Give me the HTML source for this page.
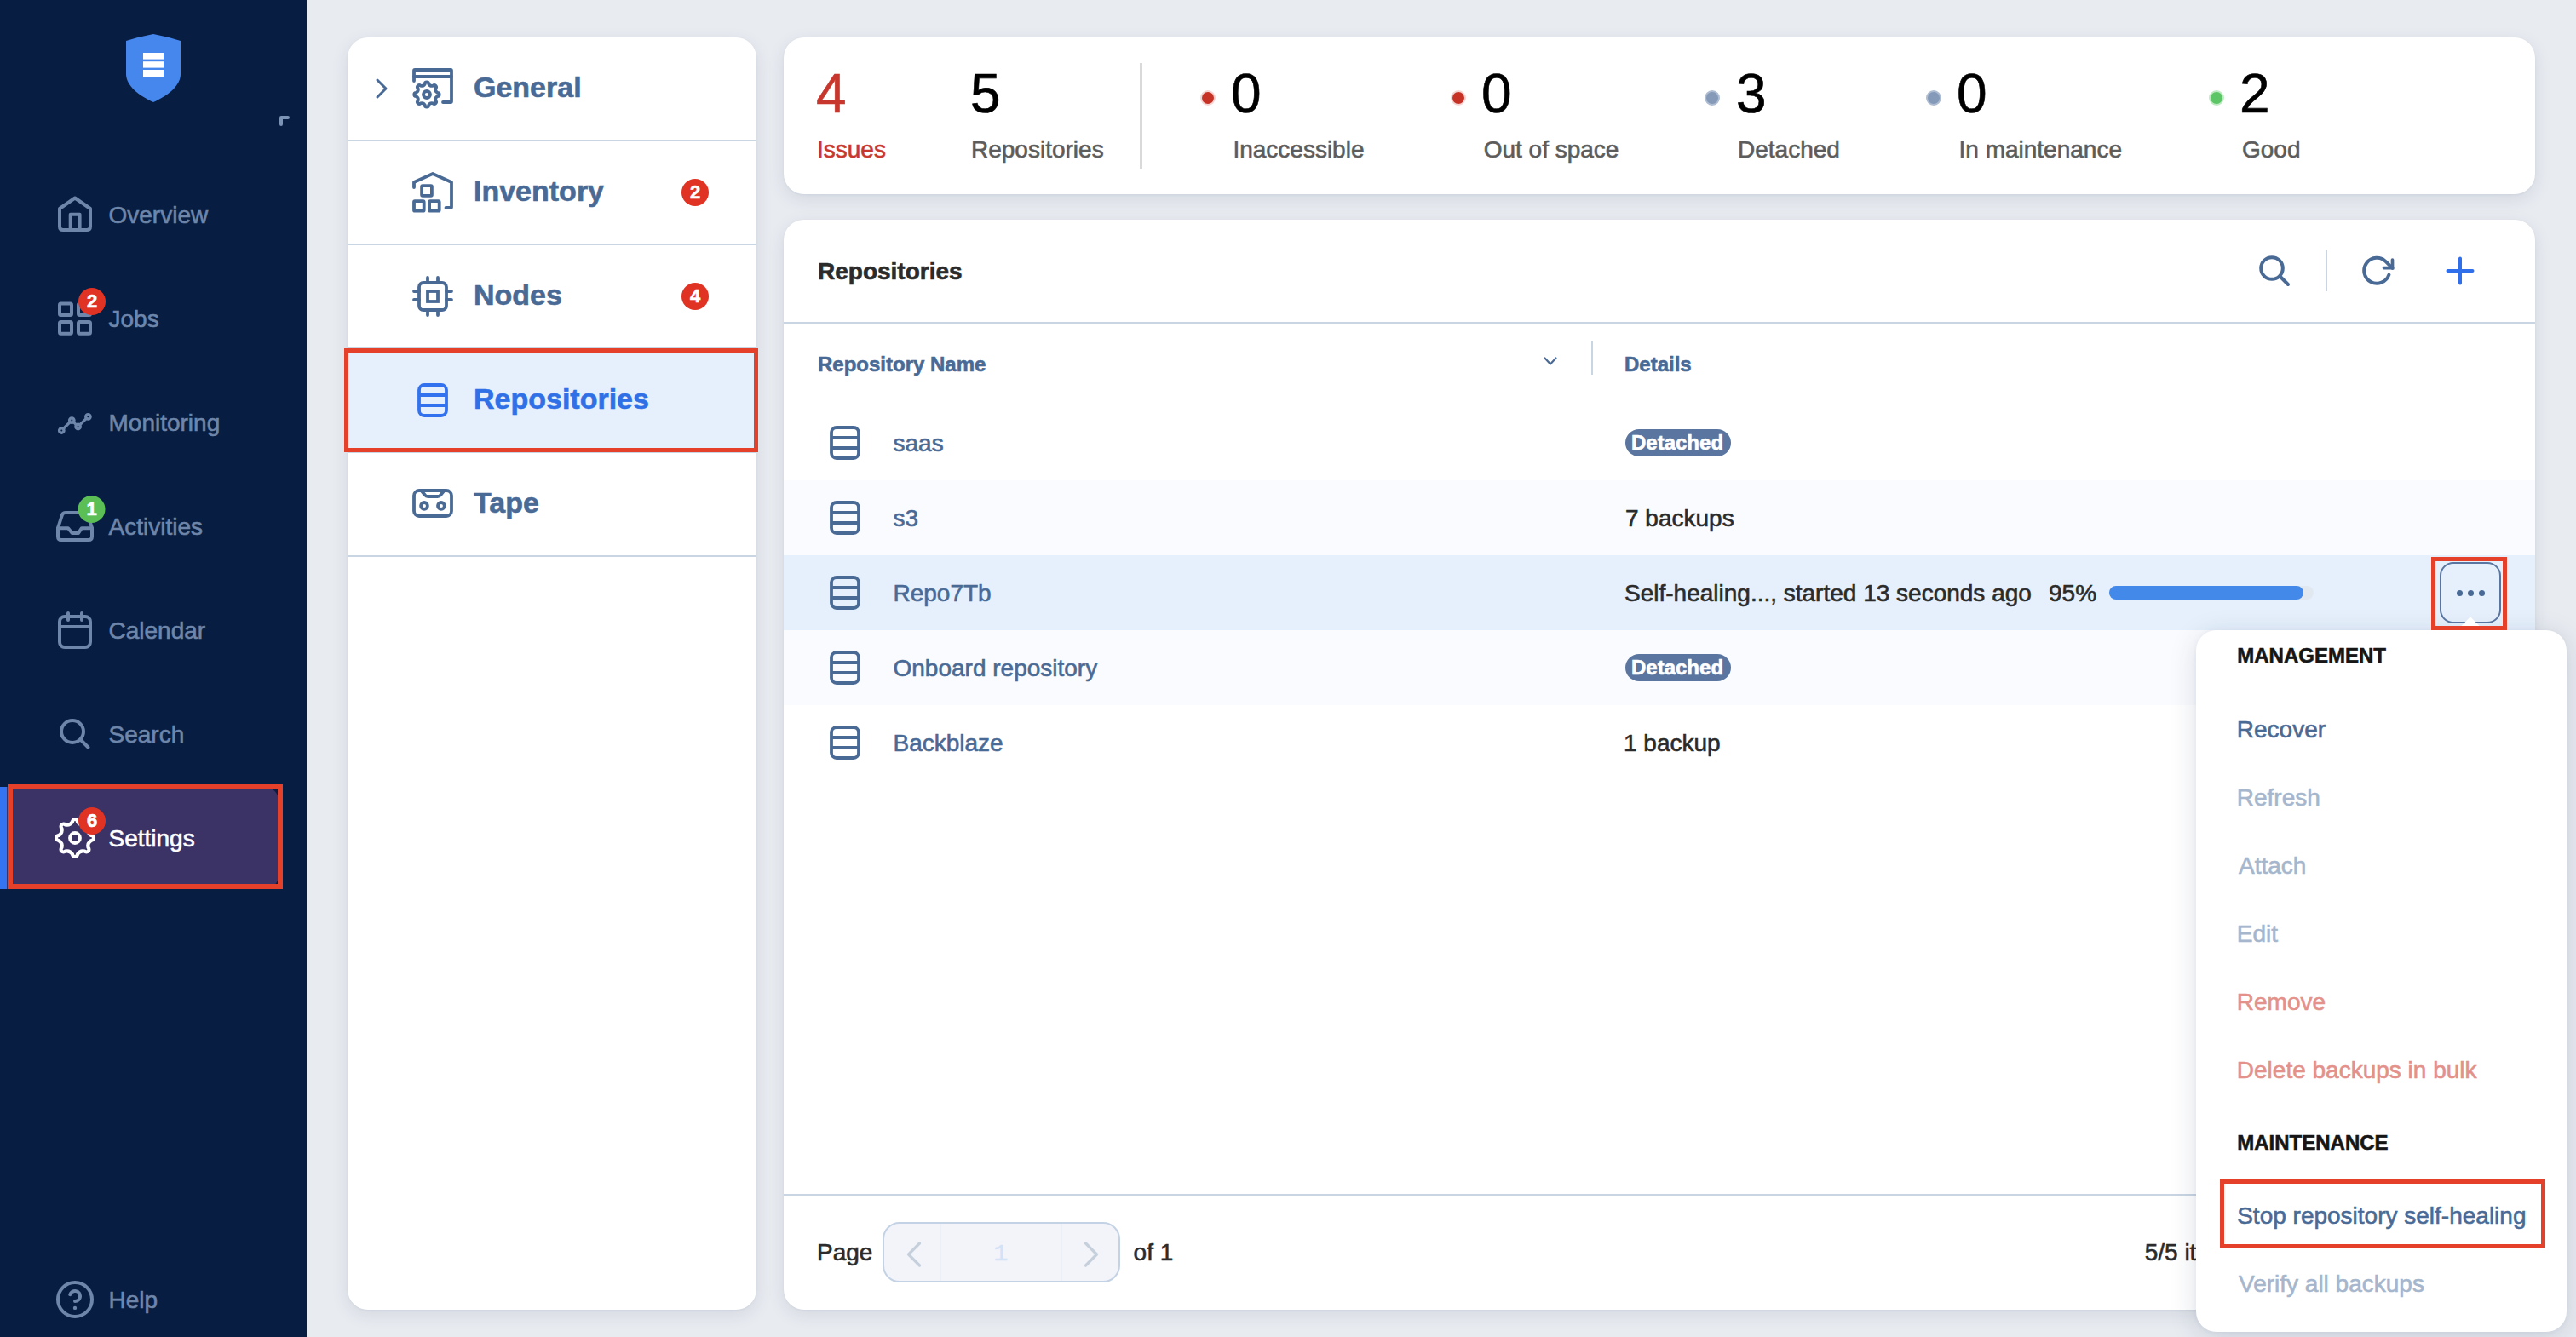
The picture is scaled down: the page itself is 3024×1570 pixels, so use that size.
<!DOCTYPE html>
<html><head><meta charset="utf-8"><style>
html,body{margin:0;padding:0;}
body{width:3024px;height:1570px;overflow:hidden;background:#e8ebf0;font-family:"Liberation Sans",sans-serif;position:relative;}
.t{position:absolute;line-height:1;white-space:nowrap;-webkit-text-stroke:0.6px currentColor;}
.abs{position:absolute;}
svg{position:absolute;overflow:visible;}
</style></head><body>
<div class="abs" style="left:0;top:0;width:360px;height:1570px;background:#071d41"></div>
<div class="abs" style="left:8px;top:924px;width:319px;height:120px;background:#3b3366;border-radius:0 16px 16px 0"></div>
<div class="abs" style="left:0;top:924px;width:8px;height:120px;background:#3574f0"></div>
<svg width="3024" height="1570" style="left:0;top:0" viewBox="0 0 3024 1570"><g transform="translate(148,40)"><path d="M32 0 Q48 3 64 8 V47 C64 60 50 72 32 80 C14 72 0 60 0 47 V8 Q16 3 32 0Z" fill="#4687ee"/><rect x="20" y="22" width="24" height="7.6" fill="#fff"/><rect x="20" y="32.2" width="24" height="7.4" fill="#fff"/><rect x="20" y="42" width="24" height="8" fill="#fff"/></g><path d="M330 146 V138 H338" fill="none" stroke="#7b93b5" stroke-width="4" stroke-linecap="round" stroke-linejoin="round"/><path d="M70 245 L88 232.5 L106 245 V266 Q106 270 102 270 H74 Q70 270 70 266 Z" fill="none" stroke="#6e86aa" stroke-width="4" stroke-linecap="round" stroke-linejoin="round"/><path d="M82.7 270 V251.7 H93.6 V270" fill="none" stroke="#6e86aa" stroke-width="4" stroke-linecap="round" stroke-linejoin="round"/><rect x="70" y="356.4" width="14" height="13.7" rx="1.5" fill="none" stroke="#6e86aa" stroke-width="4" stroke-linecap="round" stroke-linejoin="round"/><rect x="92" y="356.4" width="14" height="13.7" rx="1.5" fill="none" stroke="#6e86aa" stroke-width="4" stroke-linecap="round" stroke-linejoin="round"/><rect x="70" y="378" width="14" height="13.7" rx="1.5" fill="none" stroke="#6e86aa" stroke-width="4" stroke-linecap="round" stroke-linejoin="round"/><rect x="92" y="378" width="14" height="13.7" rx="1.5" fill="none" stroke="#6e86aa" stroke-width="4" stroke-linecap="round" stroke-linejoin="round"/><polyline points="72.3,505.5 84.3,493.6 91.6,501 103.4,489.3" fill="none" stroke="#6e86aa" stroke-width="3.2"/><circle cx="72.3" cy="505.5" r="2.7" fill="#071d41" stroke="#6e86aa" stroke-width="3.4"/><circle cx="84.3" cy="493.6" r="2.7" fill="#071d41" stroke="#6e86aa" stroke-width="3.4"/><circle cx="91.6" cy="501" r="2.7" fill="#071d41" stroke="#6e86aa" stroke-width="3.4"/><circle cx="103.4" cy="489.3" r="2.7" fill="#071d41" stroke="#6e86aa" stroke-width="3.4"/><path d="M68 620 L73 604.5 Q74 602 77 602 H99 Q102 602 103 604.5 L108 620 V630 Q108 634 104 634 H72 Q68 634 68 630 Z" fill="none" stroke="#6e86aa" stroke-width="4" stroke-linecap="round" stroke-linejoin="round"/><path d="M68 620.2 H80 L84.7 625.9 H92.1 L95.9 620.2 H108" fill="none" stroke="#6e86aa" stroke-width="4" stroke-linecap="round" stroke-linejoin="round"/><rect x="70" y="724" width="36" height="36" rx="6" fill="none" stroke="#6e86aa" stroke-width="4" stroke-linecap="round" stroke-linejoin="round"/><path d="M70 736 H106 M80 720 V728 M96 720 V728" fill="none" stroke="#6e86aa" stroke-width="4" stroke-linecap="round" stroke-linejoin="round"/><circle cx="85" cy="859" r="13" fill="none" stroke="#6e86aa" stroke-width="4" stroke-linecap="round" stroke-linejoin="round"/><path d="M95 869 L103.5 877.5" fill="none" stroke="#6e86aa" stroke-width="4" stroke-linecap="round" stroke-linejoin="round"/><path d="M85.00 965.00A3.00 3.00 0 0 1 91.00 965.00Q93.93 969.68 99.31 968.44A3.00 3.00 0 0 1 103.56 972.69Q102.32 978.07 107.00 981.00A3.00 3.00 0 0 1 107.00 987.00Q102.32 989.93 103.56 995.31A3.00 3.00 0 0 1 99.31 999.56Q93.93 998.32 91.00 1003.00A3.00 3.00 0 0 1 85.00 1003.00Q82.07 998.32 76.69 999.56A3.00 3.00 0 0 1 72.44 995.31Q73.68 989.93 69.00 987.00A3.00 3.00 0 0 1 69.00 981.00Q73.68 978.07 72.44 972.69A3.00 3.00 0 0 1 76.69 968.44Q82.07 969.68 85.00 965.00Z" fill="none" stroke="#fff" stroke-width="4.2" stroke-linejoin="round"/><circle cx="88" cy="984" r="5.9" fill="none" stroke="#fff" stroke-width="4"/><circle cx="88" cy="1526" r="20" fill="none" stroke="#6e86aa" stroke-width="4" stroke-linecap="round" stroke-linejoin="round"/><path d="M82.3 1520.2 A6 6 0 1 1 88 1528" fill="none" stroke="#6e86aa" stroke-width="4" stroke-linecap="round" stroke-linejoin="round" stroke-width="3.8"/><circle cx="88" cy="1535.9" r="2.2" fill="#6e86aa"/><circle cx="108" cy="354" r="16" fill="#e03324"/><circle cx="107.5" cy="598" r="16" fill="#5bbf55"/><circle cx="108" cy="964" r="16" fill="#e03324"/></svg>
<div class="t" style="left:92px;width:32px;text-align:center;top:343.17px;font-size:22px;font-weight:700;color:#fff">2</div>
<div class="t" style="left:91.5px;width:32px;text-align:center;top:587.17px;font-size:22px;font-weight:700;color:#fff">1</div>
<div class="t" style="left:92px;width:32px;text-align:center;top:953.17px;font-size:22px;font-weight:700;color:#fff">6</div>
<div class="t" style="left:127.5px;top:239.29px;font-size:28px;color:#6e86aa;font-weight:400;">Overview</div>
<div class="t" style="left:127.5px;top:361.29px;font-size:28px;color:#6e86aa;font-weight:400;">Jobs</div>
<div class="t" style="left:127.5px;top:483.29px;font-size:28px;color:#6e86aa;font-weight:400;">Monitoring</div>
<div class="t" style="left:127.5px;top:605.29px;font-size:28px;color:#6e86aa;font-weight:400;">Activities</div>
<div class="t" style="left:127.5px;top:727.29px;font-size:28px;color:#6e86aa;font-weight:400;">Calendar</div>
<div class="t" style="left:127.5px;top:849.29px;font-size:28px;color:#6e86aa;font-weight:400;">Search</div>
<div class="t" style="left:127.5px;top:971.29px;font-size:28px;color:#fff;font-weight:400;">Settings</div>
<div class="t" style="left:127.5px;top:1513.29px;font-size:28px;color:#6e86aa;font-weight:400;">Help</div>
<div class="abs" style="left:408px;top:44px;width:480px;height:1494px;background:#fff;border-radius:24px;box-shadow:0 6px 20px rgba(40,60,100,0.10),0 1px 3px rgba(40,60,100,0.06);"></div>
<div class="abs" style="left:408px;top:410px;width:480px;height:120px;background:#e6effc"></div>
<div class="abs" style="left:408px;top:164px;width:480px;height:2px;background:#c9d5e3"></div>
<div class="abs" style="left:408px;top:286px;width:480px;height:2px;background:#c9d5e3"></div>
<div class="abs" style="left:408px;top:408px;width:480px;height:2px;background:#c9d5e3"></div>
<div class="abs" style="left:408px;top:530px;width:480px;height:2px;background:#c9d5e3"></div>
<div class="abs" style="left:408px;top:652px;width:480px;height:2px;background:#c9d5e3"></div>
<svg width="3024" height="1570" style="left:0;top:0" viewBox="0 0 3024 1570"><path d="M443 94 L453 104 L443 114" fill="none" stroke="#4a6a96" stroke-width="3" stroke-linecap="round" stroke-linejoin="round"/><g transform="translate(476,72)"><path d="M10 23 V11 Q10 10 11 10 H53 Q54 10 54 11 V47 Q54 48 53 48 H44" fill="none" stroke="#4a6a96" stroke-width="3.8" stroke-linecap="round" stroke-linejoin="round"/><path d="M10 18 H54" fill="none" stroke="#4a6a96" stroke-width="3.8" stroke-linecap="round" stroke-linejoin="round"/><path d="M22.80 26.50A2.20 2.20 0 0 1 27.20 26.50Q28.90 29.58 32.28 28.61A2.20 2.20 0 0 1 35.39 31.72Q34.42 35.10 37.50 36.80A2.20 2.20 0 0 1 37.50 41.20Q34.42 42.90 35.39 46.28A2.20 2.20 0 0 1 32.28 49.39Q28.90 48.42 27.20 51.50A2.20 2.20 0 0 1 22.80 51.50Q21.10 48.42 17.72 49.39A2.20 2.20 0 0 1 14.61 46.28Q15.58 42.90 12.50 41.20A2.20 2.20 0 0 1 12.50 36.80Q15.58 35.10 14.61 31.72A2.20 2.20 0 0 1 17.72 28.61Q21.10 29.58 22.80 26.50Z" fill="none" stroke="#4a6a96" stroke-width="3.8" stroke-linecap="round" stroke-linejoin="round"/><circle cx="25" cy="39" r="4" fill="none" stroke="#4a6a96" stroke-width="3.8" stroke-linecap="round" stroke-linejoin="round" stroke-width="3.6"/></g><g transform="translate(476,196)"><path d="M10 24 V18 L32 8 L54 18 V47 Q54 48 53 48 H47.5" fill="none" stroke="#4a6a96" stroke-width="3.8" stroke-linecap="round" stroke-linejoin="round"/><rect x="19.1" y="22.1" width="11.8" height="11.7" rx="1" fill="none" stroke="#4a6a96" stroke-width="3.8" stroke-linecap="round" stroke-linejoin="round"/><rect x="10" y="40.2" width="11.7" height="11.5" rx="1" fill="none" stroke="#4a6a96" stroke-width="3.8" stroke-linecap="round" stroke-linejoin="round"/><rect x="28.1" y="40.2" width="11.6" height="11.5" rx="1" fill="none" stroke="#4a6a96" stroke-width="3.8" stroke-linecap="round" stroke-linejoin="round"/></g><g transform="translate(476,316)"><rect x="16" y="16" width="32" height="32" rx="5" fill="none" stroke="#4a6a96" stroke-width="3.8" stroke-linecap="round" stroke-linejoin="round"/><rect x="26" y="26" width="12" height="12" fill="none" stroke="#4a6a96" stroke-width="3.8"/><path d="M26 10 V16 M38 10 V16 M26 48 V54 M38 48 V54 M10 26 H16 M10 36 H16 M48 26 H54 M48 36 H54" fill="none" stroke="#4a6a96" stroke-width="3.8" stroke-linecap="round" stroke-linejoin="round"/></g><rect x="492" y="452" width="32" height="36" rx="6" fill="none" stroke="#3272ee" stroke-width="3.8"/><path d="M492 464 H524 M492 476 H524" stroke="#3272ee" stroke-width="3.8"/><g transform="translate(476,558)"><rect x="10" y="18" width="44" height="30" rx="6" fill="none" stroke="#4a6a96" stroke-width="3.8" stroke-linecap="round" stroke-linejoin="round"/><path d="M18.5 18 L23 23.5 Q24 25 26.5 25 H37.5 Q40 25 41 23.5 L45.5 18" fill="none" stroke="#4a6a96" stroke-width="3.8" stroke-linecap="round" stroke-linejoin="round"/><circle cx="22" cy="35.9" r="3.9" fill="none" stroke="#4a6a96" stroke-width="3.8" stroke-linecap="round" stroke-linejoin="round"/><circle cx="41.9" cy="35.9" r="3.9" fill="none" stroke="#4a6a96" stroke-width="3.8" stroke-linecap="round" stroke-linejoin="round"/></g><circle cx="816" cy="226" r="16" fill="#e03324"/><circle cx="816" cy="348" r="16" fill="#e03324"/></svg>
<div class="t" style="left:800px;width:32px;text-align:center;top:215.17px;font-size:22px;font-weight:700;color:#fff">2</div>
<div class="t" style="left:800px;width:32px;text-align:center;top:337.17px;font-size:22px;font-weight:700;color:#fff">4</div>
<div class="t" style="left:556px;top:84.91px;font-size:34px;color:#4a6a96;font-weight:700;">General</div>
<div class="t" style="left:556px;top:206.91px;font-size:34px;color:#4a6a96;font-weight:700;">Inventory</div>
<div class="t" style="left:556px;top:328.91px;font-size:34px;color:#4a6a96;font-weight:700;">Nodes</div>
<div class="t" style="left:556px;top:450.91px;font-size:34px;color:#3070e6;font-weight:700;">Repositories</div>
<div class="t" style="left:556px;top:572.91px;font-size:34px;color:#4a6a96;font-weight:700;">Tape</div>
<div class="abs" style="left:404px;top:409px;width:486px;height:122px;border:5px solid #e5402a;box-sizing:border-box"></div>
<div class="abs" style="left:920px;top:44px;width:2056px;height:184px;background:#fff;border-radius:24px;box-shadow:0 6px 20px rgba(40,60,100,0.10),0 1px 3px rgba(40,60,100,0.06);"></div>
<div class="abs" style="left:1338px;top:74px;width:3px;height:124px;background:#d9d9d9"></div>
<div class="t" style="left:958px;top:77.81px;font-size:64px;color:#c8372d;font-weight:400;">4</div>
<div class="t" style="left:959.0px;top:162.29px;font-size:28px;color:#c8372d;font-weight:400;">Issues</div>
<div class="t" style="left:1139px;top:77.81px;font-size:64px;color:#000;font-weight:400;">5</div>
<div class="t" style="left:1140px;top:162.29px;font-size:28px;color:#5c5c5c;font-weight:400;">Repositories</div>
<div class="t" style="left:1445px;top:77.81px;font-size:64px;color:#000;font-weight:400;">0</div>
<div class="t" style="left:1447.4px;top:162.29px;font-size:28px;color:#5c5c5c;font-weight:400;">Inaccessible</div>
<div class="t" style="left:1739px;top:77.81px;font-size:64px;color:#000;font-weight:400;">0</div>
<div class="t" style="left:1741.7px;top:162.29px;font-size:28px;color:#5c5c5c;font-weight:400;">Out of space</div>
<div class="t" style="left:2038px;top:77.81px;font-size:64px;color:#000;font-weight:400;">3</div>
<div class="t" style="left:2040px;top:162.29px;font-size:28px;color:#5c5c5c;font-weight:400;">Detached</div>
<div class="t" style="left:2297px;top:77.81px;font-size:64px;color:#000;font-weight:400;">0</div>
<div class="t" style="left:2299.5px;top:162.29px;font-size:28px;color:#5c5c5c;font-weight:400;">In maintenance</div>
<div class="t" style="left:2629px;top:77.81px;font-size:64px;color:#000;font-weight:400;">2</div>
<div class="t" style="left:2632px;top:162.29px;font-size:28px;color:#5c5c5c;font-weight:400;">Good</div>
<div class="abs" style="left:1409px;top:106px;width:14px;height:14px;border-radius:50%;background:#c63226;border:2px solid #f6d6d4"></div>
<div class="abs" style="left:1703px;top:106px;width:14px;height:14px;border-radius:50%;background:#c63226;border:2px solid #f6d6d4"></div>
<div class="abs" style="left:2001px;top:106px;width:14px;height:14px;border-radius:50%;background:#8599b8;border:2px solid #aebdd2"></div>
<div class="abs" style="left:2261px;top:106px;width:14px;height:14px;border-radius:50%;background:#8599b8;border:2px solid #aebdd2"></div>
<div class="abs" style="left:2593px;top:106px;width:14px;height:14px;border-radius:50%;background:#5cc565;border:2px solid #bfeac3"></div>
<div class="abs" style="left:920px;top:258px;width:2056px;height:1280px;background:#fff;border-radius:24px;box-shadow:0 6px 20px rgba(40,60,100,0.10),0 1px 3px rgba(40,60,100,0.06);overflow:hidden"><div class="abs" style="left:0;top:306px;width:2056px;height:88px;background:#fafbfe"></div><div class="abs" style="left:0;top:394px;width:2056px;height:88px;background:#e6f0fc"></div><div class="abs" style="left:0;top:482px;width:2056px;height:88px;background:#fafbfe"></div><div class="abs" style="left:0;top:120px;width:2056px;height:2px;background:#c9d5e3"></div><div class="abs" style="left:0;top:1144px;width:2056px;height:2px;background:#c9d5e3"></div></div>
<div class="t" style="left:960px;top:304.79px;font-size:28px;color:#2b2b2b;font-weight:700;">Repositories</div>
<svg width="3024" height="1570" style="left:0;top:0" viewBox="0 0 3024 1570"><circle cx="2667" cy="315" r="12.8" fill="none" stroke="#4a6a96" stroke-width="4" stroke-linecap="round" stroke-linejoin="round"/><path d="M2677.5 325.5 L2686 334" fill="none" stroke="#4a6a96" stroke-width="4" stroke-linecap="round" stroke-linejoin="round"/><rect x="2730" y="294" width="2" height="48" fill="#c9d5e3"/><path d="M2804.4 322.7 A15 15 0 1 1 2801 307.3 L2808.5 314.8" fill="none" stroke="#4a6a96" stroke-width="4" stroke-linecap="round" stroke-linejoin="round" stroke-width="3.7"/><path d="M2808.5 305 V314.6 H2798.5" fill="none" stroke="#4a6a96" stroke-width="3.7" stroke-linecap="round" stroke-linejoin="miter"/><path d="M2888 303.5 V332.5 M2873.5 318 H2902.5" fill="none" stroke="#2f6fec" stroke-width="4" stroke-linecap="round"/><path d="M1813.5 420.5 L1820 427.5 L1826.5 420.5" fill="none" stroke="#4a6a96" stroke-width="2.2" stroke-linecap="round" stroke-linejoin="round"/><rect x="1868" y="400" width="2" height="40" fill="#c9d5e3"/><rect x="976" y="502" width="32" height="36" rx="6" fill="none" stroke="#4a6a96" stroke-width="3.8"/><path d="M976 514 H1008 M976 526 H1008" stroke="#4a6a96" stroke-width="3.8"/><rect x="976" y="590" width="32" height="36" rx="6" fill="none" stroke="#4a6a96" stroke-width="3.8"/><path d="M976 602 H1008 M976 614 H1008" stroke="#4a6a96" stroke-width="3.8"/><rect x="976" y="678" width="32" height="36" rx="6" fill="none" stroke="#4a6a96" stroke-width="3.8"/><path d="M976 690 H1008 M976 702 H1008" stroke="#4a6a96" stroke-width="3.8"/><rect x="976" y="766" width="32" height="36" rx="6" fill="none" stroke="#4a6a96" stroke-width="3.8"/><path d="M976 778 H1008 M976 790 H1008" stroke="#4a6a96" stroke-width="3.8"/><rect x="976" y="854" width="32" height="36" rx="6" fill="none" stroke="#4a6a96" stroke-width="3.8"/><path d="M976 866 H1008 M976 878 H1008" stroke="#4a6a96" stroke-width="3.8"/></svg>
<div class="t" style="left:960px;top:415.68px;font-size:24px;color:#4a6a96;font-weight:700;">Repository Name</div>
<div class="t" style="left:1907px;top:415.68px;font-size:24px;color:#4a6a96;font-weight:700;">Details</div>
<div class="t" style="left:1048.5px;top:506.59px;font-size:28px;color:#4a6a96;font-weight:400;">saas</div>
<div class="t" style="left:1048.5px;top:594.59px;font-size:28px;color:#4a6a96;font-weight:400;">s3</div>
<div class="t" style="left:1048.5px;top:682.59px;font-size:28px;color:#4a6a96;font-weight:400;">Repo7Tb</div>
<div class="t" style="left:1048.5px;top:770.59px;font-size:28px;color:#4a6a96;font-weight:400;">Onboard repository</div>
<div class="t" style="left:1048.5px;top:858.59px;font-size:28px;color:#4a6a96;font-weight:400;">Backblaze</div>
<div class="abs" style="left:1908px;top:504px;width:124px;height:32px;border-radius:16px;background:#5a76a0"></div><div class="t" style="left:1915px;top:507.68px;font-size:24px;color:#fff;font-weight:700;">Detached</div>
<div class="abs" style="left:1908px;top:768px;width:124px;height:32px;border-radius:16px;background:#5a76a0"></div><div class="t" style="left:1915px;top:771.68px;font-size:24px;color:#fff;font-weight:700;">Detached</div>
<div class="t" style="left:1908px;top:594.59px;font-size:28px;color:#2b2b2b;font-weight:400;">7 backups</div>
<div class="t" style="left:1906px;top:858.59px;font-size:28px;color:#2b2b2b;font-weight:400;">1 backup</div>
<div class="t" style="left:1907px;top:682.59px;font-size:28px;color:#2b2b2b;font-weight:400;">Self-healing..., started 13 seconds ago</div>
<div class="t" style="left:2405px;top:682.59px;font-size:28px;color:#2b2b2b;font-weight:400;">95%</div>
<div class="abs" style="left:2476px;top:688px;width:240px;height:16px;border-radius:8px;background:#e2e8f0"></div><div class="abs" style="left:2476px;top:688px;width:228px;height:16px;border-radius:8px;background:#4289ea"></div>
<div class="abs" style="left:2864px;top:660px;width:72px;height:72px;border:2px solid #5a76a0;border-radius:16px;box-sizing:border-box"></div><div class="abs" style="left:2883.5px;top:692.5px;width:7px;height:7px;border-radius:50%;background:#4a6a96"></div><div class="abs" style="left:2896.5px;top:692.5px;width:7px;height:7px;border-radius:50%;background:#4a6a96"></div><div class="abs" style="left:2909.5px;top:692.5px;width:7px;height:7px;border-radius:50%;background:#4a6a96"></div>
<div class="t" style="left:959px;top:1457.29px;font-size:28px;color:#2b2b2b;font-weight:400;">Page</div>
<div class="abs" style="left:1036px;top:1435px;width:279px;height:71px;border:2px solid #c3d2e4;border-radius:20px;background:#f2f4f9;box-sizing:border-box"></div><div class="abs" style="left:1104px;top:1437px;width:1px;height:67px;background:#eceff5"></div><div class="abs" style="left:1246px;top:1437px;width:1px;height:67px;background:#eceff5"></div><svg width="3024" height="1570" style="left:0;top:0" viewBox="0 0 3024 1570"><path d="M1079.5 1460 L1066.5 1473 L1079.5 1486 M1274.5 1460 L1287.5 1473 L1274.5 1486" fill="none" stroke="#c5d0dc" stroke-width="3.2" stroke-linecap="round" stroke-linejoin="round"/></svg>
<div class="t" style="left:1135px;width:80px;text-align:center;top:1458.79px;font-size:28px;color:#d3e2f7;font-family:'Liberation Mono',monospace">1</div><div class="t" style="left:1330.6px;top:1457.29px;font-size:28px;color:#2b2b2b;font-weight:400;">of 1</div>
<div class="t" style="left:2517.7px;top:1457.29px;font-size:28px;color:#2b2b2b;font-weight:400;">5/5 items</div>
<div class="abs" style="left:2578px;top:740px;width:435px;height:824px;background:#fff;border-radius:24px;box-shadow:0 6px 32px rgba(30,50,90,0.15),0 1px 6px rgba(30,50,90,0.05)"></div>
<svg width="3024" height="1570" style="left:0;top:0" viewBox="0 0 3024 1570"><path d="M2884 740.5 L2900 724.3 L2916 740.5 Z" fill="#fff"/></svg>
<div class="t" style="left:2626.3px;top:757.98px;font-size:24px;color:#161616;font-weight:700;">MANAGEMENT</div>
<div class="t" style="left:2625.8px;top:842.59px;font-size:28px;color:#4a6a96;font-weight:400;">Recover</div>
<div class="t" style="left:2625.8px;top:922.79px;font-size:28px;color:#a5b6cd;font-weight:400;">Refresh</div>
<div class="t" style="left:2628px;top:1002.59px;font-size:28px;color:#a5b6cd;font-weight:400;">Attach</div>
<div class="t" style="left:2625.8px;top:1082.59px;font-size:28px;color:#a5b6cd;font-weight:400;">Edit</div>
<div class="t" style="left:2625.8px;top:1162.59px;font-size:28px;color:#e3918a;font-weight:400;">Remove</div>
<div class="t" style="left:2625.8px;top:1242.59px;font-size:28px;color:#e3918a;font-weight:400;">Delete backups in bulk</div>
<div class="t" style="left:2626.3px;top:1329.68px;font-size:24px;color:#161616;font-weight:700;">MAINTENANCE</div>
<div class="t" style="left:2626.2px;top:1414.09px;font-size:28px;color:#4a6a96;font-weight:400;">Stop repository self-healing</div>
<div class="t" style="left:2628px;top:1494.09px;font-size:28px;color:#a5b6cd;font-weight:400;">Verify all backups</div>
<div class="abs" style="left:2854px;top:654px;width:89px;height:86px;border:5px solid #e5402a;box-sizing:border-box"></div>
<div class="abs" style="left:2606px;top:1385px;width:382px;height:81px;border:5px solid #e5402a;box-sizing:border-box"></div>
<div class="abs" style="left:9px;top:921px;width:323px;height:123px;border:6px solid #e5402a;box-sizing:border-box"></div>
</body></html>
